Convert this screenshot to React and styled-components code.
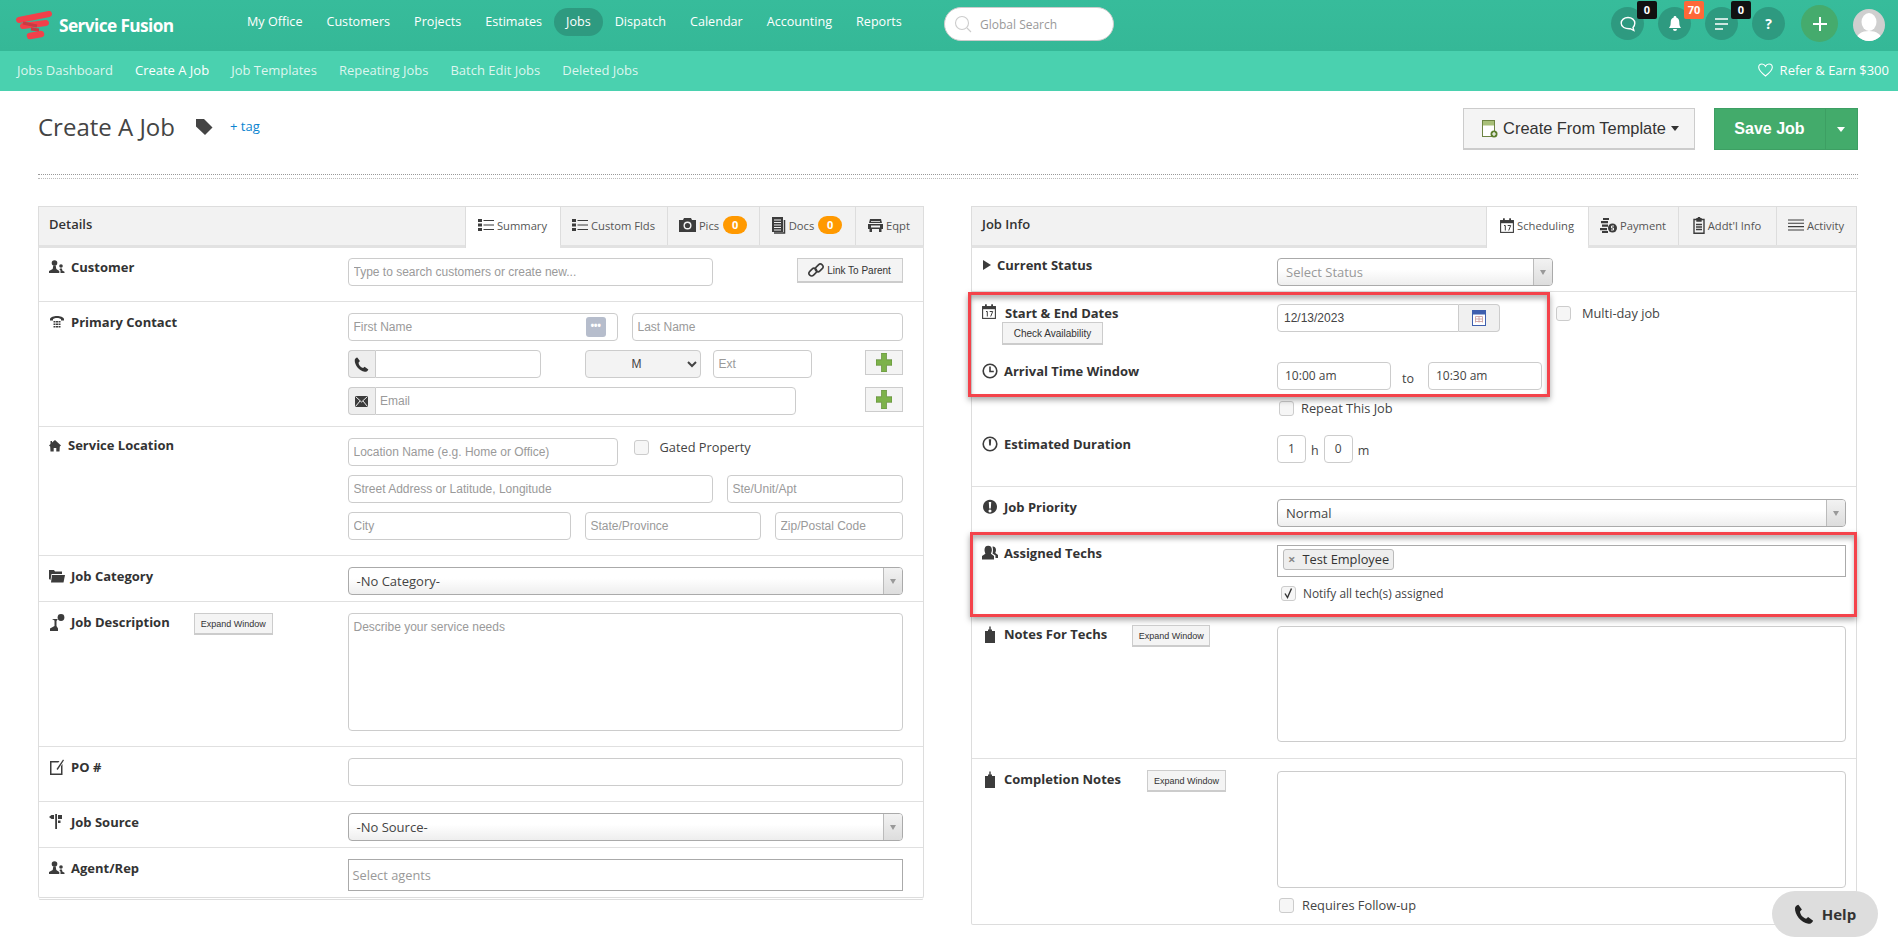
import React from "react";
import styled, { createGlobalStyle } from "styled-components";

const GlobalStyle = createGlobalStyle`
  html, body {
    margin: 0;
    padding: 0;
    background: #fff;
    font-family: "Open Sans", "Liberation Sans", sans-serif;
    color: #333;
  }
  * { box-sizing: border-box; }
  input::placeholder, textarea::placeholder { color: #9a9a9a; opacity: 1; }
`;

const TopBar = styled.div`
  position: relative;
  height: 51px;
  display: flex;
  align-items: flex-start;
  background: linear-gradient(#37bc9b, #35b897);
`;

const Brand = styled.div`
  width: 235px;
  height: 51px;
  display: flex;
  align-items: center;
  padding-left: 15px;
  flex-shrink: 0;
`;

const BrandName = styled.span`
  margin-left: 6px;
  color: #fff;
  font-size: 17.3px;
  font-weight: 700;
  letter-spacing: -0.6px;
  white-space: nowrap;
`;

const MainNav = styled.nav`
  display: flex;
  padding-top: 8px;
`;

const MainLink = styled.a`
  height: 28px;
  line-height: 28px;
  padding: 0 12px;
  border-radius: 14px;
  color: #fff;
  font-size: 12.6px;
  white-space: nowrap;
  background: ${(p) => (p.$active ? "#2e9a80" : "transparent")};
`;

const SearchBox = styled.div`
  position: absolute;
  left: 944px;
  top: 7px;
  width: 170px;
  height: 34px;
  display: flex;
  align-items: center;
  gap: 8px;
  padding-left: 9px;
  background: #fff;
  border: 1px solid #ccc;
  border-radius: 17px;
  font-size: 12px;
  color: #999;
`;

const Tools = styled.div`
  margin-left: auto;
  display: flex;
  align-items: flex-start;
  padding: 5px 13px 0 0;
`;

const ToolCircle = styled.div`
  position: relative;
  width: 33px;
  height: 33px;
  margin: 2px 14px 0 0;
  border-radius: 50%;
  background: #2e9a80;
  display: flex;
  align-items: center;
  justify-content: center;
  color: #fff;
  font-size: 14px;
  font-weight: 700;
`;

const Badge = styled.span`
  position: absolute;
  left: 26px;
  top: -6px;
  width: 20px;
  height: 18px;
  line-height: 18px;
  text-align: center;
  border-radius: 2px;
  font-size: 11px;
  font-weight: 700;
  color: #fff;
  background: ${(p) => p.$bg};
`;

const AddCircle = styled.div`
  width: 37px;
  height: 37px;
  margin: 0 15px 0 2px;
  border-radius: 50%;
  background: #45ab6d;
  display: flex;
  align-items: center;
  justify-content: center;
`;

const Avatar = styled.div`
  width: 32px;
  height: 32px;
  margin-top: 4px;
  border-radius: 50%;
  overflow: hidden;
  background: #cfcfcf;
`;

const SubBar = styled.div`
  height: 40px;
  display: flex;
  align-items: center;
  gap: 22px;
  padding: 0 9px 3px 17px;
  background: #4ad1af;
  font-size: 13px;
`;

const SubLink = styled.a`
  color: ${(p) => (p.$active ? "#fff" : "rgba(255,255,255,.82)")};
  white-space: nowrap;
`;

const Refer = styled.a`
  margin-left: auto;
  display: flex;
  align-items: center;
  gap: 7px;
  color: #fff;
`;

const Content = styled.main`
  padding: 17px 40.5px 0 38px;
`;

const TitleRow = styled.div`
  display: flex;
  align-items: flex-start;
  height: 42px;
`;

const Title = styled.h1`
  margin: 0;
  font-size: 24px;
  font-weight: 400;
  line-height: 37px;
  color: #444;
`;

const TagLink = styled.a`
  margin-left: 17px;
  line-height: 37px;
  font-size: 13px;
  color: #0a84d0;
`;

const TagIcon = styled.svg`
  margin: 11px 0 0 21px;
`;

const TemplateButton = styled.button`
  margin-left: auto;
  width: 232px;
  height: 42px;
  display: flex;
  align-items: center;
  justify-content: center;
  gap: 5px;
  background: #f4f4f4;
  border: 1px solid #ccc;
  border-bottom-width: 2px;
  font: 16.4px "Liberation Sans", Arial, sans-serif;
  color: #333;
  padding: 0 0 0 4px;
`;

const SaveGroup = styled.div`
  margin-left: 19px;
  height: 42px;
  display: flex;
  background: #43ab6b;
  border: 1px solid #3d9f63;
`;

const SaveButton = styled.div`
  width: 110px;
  text-align: center;
  color: #fff;
  font: bold 16px/40px "Liberation Sans", Arial, sans-serif;
`;

const SaveCaret = styled.div`
  width: 32px;
  border-left: 1px solid #3d9f63;
  display: flex;
  align-items: center;
  justify-content: center;
`;

const Caret = styled.span`
  display: inline-block;
  border-left: 4px solid transparent;
  border-right: 4px solid transparent;
  border-top: 5px solid ${(p) => p.$color};
`;

const DottedRule = styled.div`
  height: 5px;
  margin: 24px 0 27px;
  border-top: 1px dotted #999;
  border-bottom: 1px dotted #bbb;
`;

const Columns = styled.div`
  display: grid;
  grid-template-columns: 885.5px 885.5px;
  column-gap: 47.5px;
  align-items: start;
`;

const Panel = styled.section`
  border: 1px solid #ddd;
  border-top-width: 0;
  border-radius: 2px;
  box-shadow: 0 2px 0 -1px #fff, 0 3px 0 -1px #ddd, 0 4px 0 -3px #fff, 0 5px 0 -3px #e4e4e4;
`;

const PanelHead = styled.header`
  height: 42px;
  display: flex;
  background: #f2f2f2;
  border-top: 1px solid #ddd;
  border-bottom: 3px solid #e2e2e2;
  margin: 0 -1px;
  border-left: 1px solid #ddd;
  border-right: 1px solid #ddd;
`;

const PanelTitle = styled.div`
  flex: 1;
  padding-left: 10px;
  font-size: 13px;
  font-weight: 600;
  line-height: 35px;
  color: #333;
`;

const Tab = styled.div`
  width: ${(p) => p.$w}px;
  display: flex;
  align-items: center;
  justify-content: center;
  gap: 3px;
  border-left: 1px solid #ddd;
  font-size: 11.2px;
  color: #555;
  height: ${(p) => (p.$active ? "41px" : "38px")};
  padding-bottom: ${(p) => (p.$active ? "5px" : "2px")};
  background: ${(p) => (p.$active ? "#fff" : "transparent")};
  white-space: nowrap;
`;

const Count = styled.span`
  margin-left: 1px;
  width: 24px;
  height: 18px;
  line-height: 18px;
  border-radius: 9px;
  text-align: center;
  background: #f90;
  color: #fff;
  font-size: 11px;
  font-weight: 700;
`;

const Row = styled.div`
  position: relative;
  display: grid;
  grid-template-columns: ${(p) => p.$col}px 1fr;
  grid-template-rows: ${(p) => p.$rows || "auto"};
  padding: ${(p) => p.$pt ?? 12}px ${(p) => p.$pr ?? 20}px ${(p) => p.$pb ?? 14}px 10px;
  border-bottom: ${(p) => (p.$last ? "none" : "1px solid #e0e0e0")};
`;

const Label = styled.div`
  display: flex;
  align-items: flex-start;
  gap: ${(p) => p.$gap ?? 6}px;
  margin-top: ${(p) => p.$mt ?? 0}px;
  font-size: 13px;
  font-weight: 700;
  line-height: 19px;
  color: #333;
  white-space: nowrap;
`;

const LabelIcon = styled.svg`
  flex-shrink: 0;
  margin-top: 1px;
  fill: #3c3c3c;
`;

const LabelStack = styled.div`
  display: flex;
  flex-direction: column;
  align-items: flex-start;
`;

const SmallButton = styled.div`
  width: ${(p) => p.$w}px;
  height: ${(p) => p.$h || 22}px;
  margin-left: ${(p) => p.$ml || 0}px;
  margin-top: ${(p) => p.$mt || 0}px;
  display: flex;
  align-items: center;
  justify-content: center;
  gap: 3px;
  flex-shrink: 0;
  background: #f4f4f4;
  border: 1px solid #ccc;
  border-bottom-width: 2px;
  font: 400 ${(p) => p.$size || 10}px "Liberation Sans", Arial, sans-serif;
  color: #333;
`;

const Fields = styled.div`
  display: flex;
  flex-direction: column;
  gap: 9px;
`;

const Line = styled.div`
  display: flex;
  align-items: ${(p) => p.$align || "flex-start"};
  gap: ${(p) => p.$gap ?? 0}px;
  position: relative;
`;

const Input = styled.input`
  width: ${(p) => (p.$w ? `${p.$w}px` : "100%")};
  height: 28px;
  margin-left: ${(p) => p.$ml || 0}px;
  padding: 0 5px;
  flex-shrink: 0;
  background: #fff;
  border: 1px solid #ccc;
  border-radius: 4px;
  font: 12px "Liberation Sans", Arial, sans-serif;
  color: #444;
  outline: none;
`;

const SansInput = styled(Input)`
  font-family: "Open Sans", sans-serif;
  text-align: ${(p) => (p.$center ? "center" : "left")};
  padding: 0 ${(p) => (p.$center ? 2 : 7)}px 2px;
`;

const DateInput = styled(Input)`
  border-radius: 4px 0 0 4px;
  padding-left: 6px;
`;

const Area = styled.textarea`
  display: block;
  width: 100%;
  height: ${(p) => p.$h}px;
  padding: 6px 5px;
  resize: none;
  border: 1px solid #ccc;
  border-radius: 4px;
  font: 12px "Liberation Sans", Arial, sans-serif;
`;

const Square = styled.div`
  width: 100%;
  height: 32px;
  display: flex;
  align-items: center;
  padding: 0 0 1px 4px;
  border: 1px solid #aaa;
  font-size: 12.8px;
  color: #999;
`;

const SelectBox = styled.div`
  display: flex;
  width: ${(p) => (p.$w ? `${p.$w}px` : "100%")};
  height: 28px;
  border: 1px solid #aaa;
  border-radius: 4px;
  overflow: hidden;
  background: linear-gradient(#fff 40%, #eee);
`;

const SelectText = styled.div`
  flex: 1;
  padding-left: 8px;
  line-height: 26px;
  font-size: 13px;
  color: ${(p) => (p.$muted ? "#999" : "#444")};
`;

const SelectArrow = styled.div`
  width: 19px;
  display: flex;
  align-items: center;
  justify-content: center;
  border-left: 1px solid #bbb;
  background: linear-gradient(#f2f2f2, #ddd);
`;

const SmallCaret = styled.span`
  display: inline-block;
  border-left: 3px solid transparent;
  border-right: 3px solid transparent;
  border-top: 5px solid #999;
`;

const Addon = styled.div`
  width: 27.5px;
  height: 28px;
  flex-shrink: 0;
  display: flex;
  align-items: center;
  justify-content: center;
  background: #eee;
  border: 1px solid #ccc;
  border-right: none;
  border-radius: 4px 0 0 4px;
`;

const GroupInput = styled(Input)`
  border-radius: 0 4px 4px 0;
  padding-left: 4px;
`;

const ContactPicker = styled.div`
  position: absolute;
  left: 238px;
  top: 4px;
  width: 20px;
  height: 20px;
  border-radius: 3px;
  background: #b6bdcc;
  color: #fff;
  font-size: 10px;
  font-weight: 700;
  line-height: 17px;
  text-align: center;
  letter-spacing: -0.5px;
`;

const GenderSelect = styled.select`
  width: 116px;
  height: 28px;
  margin-left: 44px;
  padding-left: 42px;
  background: #f3f3f3;
  border: 1px solid #ccc;
  border-radius: 4px;
  font: 12px "Liberation Sans", Arial, sans-serif;
  color: #444;
`;

const PlusButton = styled.div`
  width: 37.5px;
  height: 25px;
  margin-left: auto;
  display: flex;
  align-items: center;
  justify-content: center;
  background: #f4f4f4;
  border: 1px solid #ccc;
`;

const Box = styled.span`
  width: 15px;
  height: 15px;
  flex-shrink: 0;
  display: inline-flex;
  align-items: center;
  justify-content: center;
  background: #f6f6f6;
  border: 1px solid #ccc;
  border-radius: 3px;
`;

const CheckLabel = styled.label`
  display: flex;
  align-items: center;
  align-self: flex-start;
  gap: ${(p) => p.$gap ?? 7}px;
  margin: ${(p) => p.$margin || 0};
  font-size: ${(p) => p.$size || 12.8}px;
  color: #444;
  white-space: nowrap;
`;

const Unit = styled.span`
  font-size: 12.5px;
  color: #444;
  margin: ${(p) => p.$margin};
`;

const DateAddon = styled.div`
  width: 41px;
  height: 28px;
  display: flex;
  align-items: center;
  justify-content: center;
  background: #f0f0f0;
  border: 1px solid #ccc;
  border-left: none;
  border-radius: 0 4px 4px 0;
`;

const TagField = styled.div`
  width: 100%;
  height: 32px;
  display: flex;
  align-items: flex-start;
  padding: 3px 0 0 5px;
  border: 1px solid #aaa;
`;

const Chip = styled.span`
  height: 21px;
  width: 111px;
  display: flex;
  align-items: center;
  gap: 7px;
  padding: 0 0 2px 4px;
  background: #eee;
  border: 1px solid #bbb;
  border-radius: 3px;
  font-size: 12.8px;
  white-space: nowrap;
  color: #333;
`;

const ChipX = styled.span`
  color: #888;
  font-size: 13px;
  font-weight: 700;
`;

const Highlight = styled.div`
  position: absolute;
  left: ${(p) => p.$left}px;
  top: ${(p) => p.$top}px;
  width: ${(p) => p.$w}px;
  height: ${(p) => p.$h}px;
  border: 3px solid #f4434b;
  box-shadow: 0 3px 6px rgba(0, 0, 0, 0.35), inset 0 4px 5px rgba(0, 0, 0, 0.28);
  pointer-events: none;
`;

const HelpButton = styled.div`
  position: fixed;
  left: 1772px;
  top: 891px;
  width: 106px;
  height: 46px;
  display: flex;
  align-items: center;
  justify-content: center;
  gap: 8px;
  background: #ddd;
  border-radius: 23px;
  font-size: 15px;
  font-weight: 700;
  color: #333;
`;

/* drawings */
const Logo = () => (
  <svg width="38" height="30" viewBox="0 0 38 30">
    <path d="M4 9 L34 3 M8 15 L31 12" stroke="#f2404a" strokeWidth="6" strokeLinecap="round" fill="none" />
    <path d="M15 25 L26 23" stroke="#f2404a" strokeWidth="6.5" strokeLinecap="round" fill="none" />
    <path d="M8 12 L22 15 M16 18 L24 19" stroke="#c93a42" strokeWidth="3" fill="none" />
  </svg>
);

const Users = ({ w = 16 }) => (
  <LabelIcon width={w} height="16" viewBox="0 0 16 16">
    <circle cx="5.5" cy="4" r="2.8" />
    <path d="M4.3 6.5h2.4l.6 3.5 3 2V14H0v-2l3.7-2z" />
    <circle cx="12" cy="7" r="1.8" />
    <path d="M11 9.5h2l.3 2 2.2 1.2V14h-4v-2.6l-1-1z" />
  </LabelIcon>
);

const PhoneDesk = () => (
  <LabelIcon width="16" height="16" viewBox="0 0 16 16">
    <path d="M1 5c1-4 13-4 14 0v1.5h-3V5C10 3.5 6 3.5 4 5v1.5H1z" />
    <path d="M4.5 7h2v1.5h-2zM7 7h2v1.5H7zM9.5 7h2v1.5h-2zM4.5 9.5h2V11h-2zM7 9.5h2V11H7zM9.5 9.5h2V11h-2zM4.5 12h2v1.5h-2zM7 12h2v1.5H7zM9.5 12h2v1.5h-2z" />
  </LabelIcon>
);

const Home = () => (
  <LabelIcon width="12" height="16" viewBox="0 0 12 16">
    <path d="M6 3 L12 8.5 L10.8 9.5 L10.5 14.5 H7.3 V11 H4.7 V14.5 H1.5 L1.2 9.5 L0 8.5 L1.5 7 V4 H3 V5.6z" />
  </LabelIcon>
);

const Folder = () => (
  <LabelIcon width="16" height="16" viewBox="0 0 16 16">
    <path d="M0 2h5l1 1.5h7V6H2.5L1.5 12 0 11z" />
    <path d="M3 7h13l-1.5 7.5H2z" />
  </LabelIcon>
);

const Speaker = () => (
  <LabelIcon width="16" height="17" viewBox="0 0 16 17">
    <circle cx="12" cy="3.5" r="3.4" />
    <path d="M8.8 5 H3 l2.5 1.5 V12 L1 14.5 V17 h8 v-2.5 L7.5 12 V7z" />
  </LabelIcon>
);

const EditBox = () => (
  <LabelIcon width="16" height="17" viewBox="0 0 16 17">
    <path d="M1 2h9.5L9.3 3.5H2.5V14.5H12V7l1.5-2V16H1z" />
    <path d="M7.5 10 L14 0.5 l1 .8 L8.7 11z" />
  </LabelIcon>
);

const SignPost = () => (
  <LabelIcon width="16" height="17" viewBox="0 0 16 17">
    <rect x="6.2" y="0" width="1.8" height="15" />
    <path d="M0 3l2.5-2H5v4H2.5zM9 1h4v4H9zM9 6.5h2.5v2.5H9z" />
  </LabelIcon>
);

const Triangle = () => (
  <LabelIcon width="10" height="16" viewBox="0 0 10 16">
    <path d="M1 3 L9 8 L1 13z" />
  </LabelIcon>
);

const CalendarDay = ({ size = 16, fill = "#3c3c3c" }) => (
  <svg width={size} height={size + 1} viewBox="0 0 14 15" style={{ flexShrink: 0 }}>
    <rect x="0.6" y="2.6" width="12.8" height="11.8" fill="#fff" stroke={fill} strokeWidth="1.1" />
    <rect x="0.6" y="2.6" width="12.8" height="2.6" fill={fill} />
    <rect x="3" y="0.3" width="1.8" height="3.4" fill={fill} />
    <rect x="9.2" y="0.3" width="1.8" height="3.4" fill={fill} />
    <path d="M4 7.5h1.3v5M7.7 7.5h3l-2 5" fill="none" stroke={fill} strokeWidth="1" />
  </svg>
);

const Clock = () => (
  <LabelIcon width="16" height="16" viewBox="0 0 16 16" style={{ fill: "none" }}>
    <circle cx="8" cy="8" r="6.8" stroke="#3c3c3c" strokeWidth="1.6" />
    <path d="M8 3.5V8.5H11.8" stroke="#3c3c3c" strokeWidth="1.6" />
  </LabelIcon>
);

const Timer = () => (
  <LabelIcon width="16" height="16" viewBox="0 0 16 16" style={{ fill: "none" }}>
    <circle cx="8" cy="8" r="6.8" stroke="#3c3c3c" strokeWidth="1.6" />
    <path d="M6.8 3.2h2.4L8.8 9.5H7.2z" fill="#3c3c3c" />
  </LabelIcon>
);

const Alert = () => (
  <LabelIcon width="16" height="16" viewBox="0 0 16 16">
    <path d="M8 .8a7 7 0 1 0 .01 0zM6.8 3h2.4l-.4 6.5H7.2zM8 10.5a1.5 1.5 0 1 1-.01 0z" fillRule="evenodd" />
  </LabelIcon>
);

const Techs = () => (
  <LabelIcon width="16" height="16" viewBox="0 0 16 16">
    <path d="M2.5 5a3.7 4.3 0 0 1 7.4 0 c0 2-1 3-1 3.8L12 11v3.5H0V11l3.4-2.2C3.4 8 2.5 7 2.5 5z" />
    <path d="M10.5 1.5a3 3.5 0 0 1 3.5 3.5c0 1.5-.7 2.5-.7 3l2.7 2V13h-2.5v-2.5L10.5 8.5c.5-1.5.8-4 0-7z" />
  </LabelIcon>
);

const Clipboard = () => (
  <LabelIcon width="16" height="17" viewBox="0 0 16 17">
    <path d="M3 5h3V3.500h1.300V.5h1.400v3H10V5h3v12H3z" />
  </LabelIcon>
);

const ListIcon = () => (
  <svg width="16" height="12" viewBox="0 0 16 12" fill="#3c3c3c">
    <path d="M0 0h4v3H0zM0 4.500h4v3H0zM0 9h4v3H0zM5.500 1h10.500v1.100H5.500zM5.500 5.500h10.500v1.100H5.500zM5.500 10h10.500v1.100H5.500z" />
  </svg>
);

const Camera = () => (
  <svg width="17" height="14" viewBox="0 0 17 14">
    <path d="M0 2h4l1-2h7l1 2h4v12H0z" fill="#3c3c3c" />
    <circle cx="8.500" cy="7.500" r="4" fill="#f2f2f2" />
    <circle cx="8.500" cy="7.500" r="2.600" fill="#3c3c3c" />
  </svg>
);

const DocsIcon = () => (
  <svg width="14" height="17" viewBox="0 0 14 17">
    <rect x="0" y="0" width="11" height="15" fill="#3c3c3c" />
    <path d="M2 3h7M2 5.500h7M2 8h7M2 10.500h7M2 13h7" stroke="#f2f2f2" strokeWidth="1" />
    <path d="M12.500 3v13H2" stroke="#3c3c3c" strokeWidth="1.500" fill="none" />
  </svg>
);

const Seat = () => (
  <svg width="15" height="13" viewBox="0 0 15 13" fill="#3c3c3c">
    <path d="M2 0h11l1 4H1zM0 5h15v5h-1.500v3H11v-3H4v3H1.500v-3H0z" />
    <path d="M3 6.500h9v2H3z" fill="#f2f2f2" />
    <path d="M3 2h9v.8H3z" fill="#f2f2f2" />
  </svg>
);

const Coins = () => (
  <svg width="17" height="15" viewBox="0 0 17 15" fill="#3c3c3c">
    <path d="M3 0h6v2H3zM1 3h7v2.200H1zM2 6.500h6v2.200H2zM0 10h7v2.200H0zM2 13h6v2H2z" />
    <circle cx="12.500" cy="10" r="4.500" />
    <path d="M14 8h-2.500v2h2v2H11" stroke="#fff" strokeWidth="0.900" fill="none" />
  </svg>
);

const ClipOutline = () => (
  <svg width="12" height="17" viewBox="0 0 12 17" fill="none" stroke="#3c3c3c" strokeWidth="1.400">
    <path d="M4 2.500H1v13.800h10V2.500H8" />
    <path d="M4 4V1.800h1.500V.7h1v1.100H8V4z" fill="#3c3c3c" />
    <path d="M3 7.500h6M3 10h6M3 12.500h6" />
  </svg>
);

const Lines = () => (
  <svg width="16" height="12" viewBox="0 0 16 12" stroke="#3c3c3c" strokeWidth="1.100">
    <path d="M0 1h16M0 4.300h16M0 7.600h16M0 11h16" />
  </svg>
);

const Handset = ({ size = 16, fill = "#333" }) => (
  <svg width={size} height={size} viewBox="0 0 16 16" fill={fill}>
    <path d="M3.500 0.500 L6.300 4.300 L4.800 6 C5 8.500 7 11 9.700 11.700 L11.300 10.400 L15.300 13.300 C14.700 15 13 16 11.500 15.800 C5.500 14.800 0.500 8.500 0.800 3.200 C1 1.800 2 0.800 3.500 0.500z" />
  </svg>
);

const Envelope = () => (
  <svg width="13" height="11" viewBox="0 0 13 11">
    <rect width="13" height="11" fill="#3c3c3c" />
    <path d="M0.500 0.500 L6.500 6 L12.500 0.500 M0.500 10.500 L5 5 M12.500 10.500 L8 5" stroke="#eee" strokeWidth="1" fill="none" />
  </svg>
);

const GreenPlus = () => (
  <svg width="16" height="19" viewBox="0 0 16 19">
    <path d="M5.500 0h5v6.700H16v5.600h-5.500V19h-5v-6.700H0V6.700h5.500z" fill="#7db24a" stroke="#557f2c" strokeWidth="0.600" />
  </svg>
);

const ChainLink = () => (
  <svg width="16" height="16" viewBox="0 0 15 15" fill="none" stroke="#3c3c3c" strokeWidth="1.500">
    <rect x="0.500" y="7" width="8" height="5" rx="2.500" transform="rotate(-45 4.500 9.500)" />
    <rect x="6.500" y="3" width="8" height="5" rx="2.500" transform="rotate(-45 10.500 5.500)" />
  </svg>
);

const DateIcon = () => (
  <svg width="14" height="16" viewBox="0 0 14 16">
    <rect x="0.500" y="0.500" width="13" height="15" fill="#fff" stroke="#3f5fae" />
    <rect x="1" y="1" width="12" height="3.500" fill="#3f5fae" />
    <path d="M3.500 6.500h7M3.500 9h7M3.500 11.500h7M3.500 6.500v6M7 6.500v6M10.500 6.500v6" stroke="#c99" strokeWidth="0.800" />
  </svg>
);

const TemplateIcon = () => (
  <svg width="16" height="18" viewBox="0 0 16 18">
    <rect x="0.500" y="0.500" width="12" height="16" fill="#fff" stroke="#6d8442" />
    <rect x="1" y="1" width="11" height="4.500" fill="#a8bf78" />
    <circle cx="12" cy="14" r="3.500" fill="#5b7e2c" />
    <path d="M12 12v4M10 14h4" stroke="#fff" strokeWidth="1.200" />
  </svg>
);

const Select = ({ text, muted, w }) => (
  <SelectBox $w={w}>
    <SelectText $muted={muted}>{text}</SelectText>
    <SelectArrow><SmallCaret /></SelectArrow>
  </SelectBox>
);

const CheckBox = ({ checked }) => (
  <Box>
    {checked && (
      <svg width="11" height="12" viewBox="0 0 11 12">
        <path d="M2 6.500 L4.500 10.500 L8.500 1.500" stroke="#333" strokeWidth="1.400" fill="none" />
      </svg>
    )}
  </Box>
);

const navItems = ["My Office", "Customers", "Projects", "Estimates", "Jobs", "Dispatch", "Calendar", "Accounting", "Reports"];
const subItems = ["Jobs Dashboard", "Create A Job", "Job Templates", "Repeating Jobs", "Batch Edit Jobs", "Deleted Jobs"];

export default function App() {
  return (
    <>
      <GlobalStyle />
      <TopBar>
        <Brand>
          <Logo />
          <BrandName>Service Fusion</BrandName>
        </Brand>
        <MainNav>
          {navItems.map((item) => (
            <MainLink key={item} $active={item === "Jobs"}>{item}</MainLink>
          ))}
        </MainNav>
        <SearchBox>
          <svg width="18" height="18" viewBox="0 0 18 18" fill="none" stroke="#ccc" strokeWidth="1.100">
            <circle cx="8" cy="8" r="6.500" />
            <path d="M13 13l4 4" />
          </svg>
          Global Search
        </SearchBox>
        <Tools>
          <ToolCircle>
            <svg width="16" height="16" viewBox="0 0 16 16" fill="none" stroke="#fff" strokeWidth="1.400">
              <path d="M8 1.500c3.800 0 6.800 2.400 6.800 5.700 0 2-1 3.500-1.800 4.300l.8 3-3.500-1.800C5 13 1.200 11 1.200 7.200 1.200 3.900 4.200 1.500 8 1.500z" />
            </svg>
            <Badge $bg="#111">0</Badge>
          </ToolCircle>
          <ToolCircle>
            <svg width="14" height="16" viewBox="0 0 14 16" fill="#fff">
              <path d="M7 0a1.300 1.300 0 0 1 1.300 1.500C10.500 2.200 11.300 4 11.300 6.500c0 2.500.5 4 1.700 5.500H1c1.200-1.500 1.700-3 1.700-5.500 0-2.500.8-4.300 3-5A1.300 1.300 0 0 1 7 0zM5 13h4a2 2 0 0 1-4 0z" />
            </svg>
            <Badge $bg="#ff6838">70</Badge>
          </ToolCircle>
          <ToolCircle>
            <svg width="14" height="12" viewBox="0 0 14 12" stroke="#fff" strokeWidth="1.400">
              <path d="M0 1h13M0 6h13M0 11h8" />
            </svg>
            <Badge $bg="#111">0</Badge>
          </ToolCircle>
          <ToolCircle>?</ToolCircle>
          <AddCircle>
            <svg width="14" height="14" viewBox="0 0 14 14" stroke="#fff" strokeWidth="2">
              <path d="M7 0v14M0 7h14" />
            </svg>
          </AddCircle>
          <Avatar>
            <svg width="32" height="32" viewBox="0 0 32 32" fill="#fff">
              <ellipse cx="16" cy="13" rx="7.500" ry="9" />
              <path d="M3 32c0-7 6-10 13-10s13 3 13 10z" />
            </svg>
          </Avatar>
        </Tools>
      </TopBar>
      <SubBar>
        {subItems.map((item) => (
          <SubLink key={item} $active={item === "Create A Job"}>{item}</SubLink>
        ))}
        <Refer>
          <svg width="15" height="14" viewBox="0 0 15 14" fill="none" stroke="#fff" strokeWidth="1.100">
            <path d="M7.500 13C3 9.500.7 7.300.7 4.300.7 2.300 2.200 1 4 1c1.500 0 2.800.9 3.500 2.300C8.200 1.900 9.500 1 11 1c1.800 0 3.300 1.300 3.300 3.300C14.300 7.300 12 9.500 7.500 13z" />
          </svg>
          Refer &amp; Earn $300
        </Refer>
      </SubBar>

      <Content>
        <TitleRow>
          <Title>Create A Job</Title>
          <TagIcon width="17" height="16" viewBox="0 0 17 16" fill="#444">
            <path d="M0 0h8l8.500 8.500L9 16 0 7.500z" />
          </TagIcon>
          <TagLink>+ tag</TagLink>
          <TemplateButton>
            <TemplateIcon />
            Create From Template
            <Caret $color="#333" />
          </TemplateButton>
          <SaveGroup>
            <SaveButton>Save Job</SaveButton>
            <SaveCaret><Caret $color="#fff" /></SaveCaret>
          </SaveGroup>
        </TitleRow>
        <DottedRule />

        <Columns>
          <Panel>
            <PanelHead>
              <PanelTitle>Details</PanelTitle>
              <Tab $w={95} $active><ListIcon />Summary</Tab>
              <Tab $w={107}><ListIcon />Custom Flds</Tab>
              <Tab $w={92}><Camera />Pics<Count>0</Count></Tab>
              <Tab $w={96}><DocsIcon />Docs<Count>0</Count></Tab>
              <Tab $w={68}><Seat />Eqpt</Tab>
            </PanelHead>

            <Row $col={298.5} $pt={10} $pb={15}>
              <Label><Users />Customer</Label>
              <Line>
                <Input $w={365} placeholder="Type to search customers or create new..." />
                <SmallButton $w={106} $h={25} $ml={84}>
                  <ChainLink />Link To Parent
                </SmallButton>
              </Line>
            </Row>

            <Row $col={298.5} $pt={11} $pb={11}>
              <Label><PhoneDesk />Primary Contact</Label>
              <Fields>
                <Line $gap={14}>
                  <Input $w={270} placeholder="First Name" />
                  <ContactPicker>•••</ContactPicker>
                  <Input $w={271} placeholder="Last Name" />
                </Line>
                <Line>
                  <Addon><Handset size={15} /></Addon>
                  <GroupInput $w={165.5} />
                  <GenderSelect defaultValue="M"><option>M</option></GenderSelect>
                  <Input $w={99} $ml={12} placeholder="Ext" />
                  <PlusButton><GreenPlus /></PlusButton>
                </Line>
                <Line>
                  <Addon><Envelope /></Addon>
                  <GroupInput $w={420.5} placeholder="Email" />
                  <PlusButton><GreenPlus /></PlusButton>
                </Line>
              </Fields>
            </Row>

            <Row $col={298.5} $pt={11} $pb={15}>
              <Label $gap={7} $mt={-2}><Home />Service Location</Label>
              <Fields>
                <Line>
                  <Input $w={270} placeholder="Location Name (e.g. Home or Office)" />
                  <CheckLabel $margin="0 0 0 16px" $gap={11}><CheckBox />Gated Property</CheckLabel>
                </Line>
                <Line $gap={14}>
                  <Input $w={365} placeholder="Street Address or Latitude, Longitude" />
                  <Input $w={176} placeholder="Ste/Unit/Apt" />
                </Line>
                <Line $gap={14}>
                  <Input $w={223} placeholder="City" />
                  <Input $w={176} placeholder="State/Province" />
                  <Input $w={128} placeholder="Zip/Postal Code" />
                </Line>
              </Fields>
            </Row>

            <Row $col={298.5} $pt={11} $pb={6}>
              <Label><Folder />Job Category</Label>
              <Select text="-No Category-" />
            </Row>

            <Row $col={298.5} $pt={11} $pb={15}>
              <Label>
                <Speaker />Job Description
                <SmallButton $w={79} $ml={18} $size={9}>Expand Window</SmallButton>
              </Label>
              <Area $h={118} placeholder="Describe your service needs" />
            </Row>

            <Row $col={298.5} $pt={11} $pb={15}>
              <Label><EditBox />PO #</Label>
              <Input />
            </Row>

            <Row $col={298.5} $pt={11} $pb={6}>
              <Label><SignPost />Job Source</Label>
              <Select text="-No Source-" />
            </Row>

            <Row $col={298.5} $pt={11} $pb={6} $last>
              <Label><Users />Agent/Rep</Label>
              <Square>Select agents</Square>
            </Row>
          </Panel>

          <Panel>
            <PanelHead>
              <PanelTitle>Job Info</PanelTitle>
              <Tab $w={102} $active><CalendarDay size={14} />Scheduling</Tab>
              <Tab $w={90}><Coins />Payment</Tab>
              <Tab $w={98}><ClipOutline />Addt'l Info</Tab>
              <Tab $w={80}><Lines />Activity</Tab>
            </PanelHead>

            <Row $col={295} $pt={10} $pb={5} $pr={10}>
              <Label $gap={5} $mt={-2}><Triangle />Current Status</Label>
              <Select text="Select Status" muted w={276} />
            </Row>

            <Row $col={295} $pb={23} $pr={10} $rows="58px 40px 33px auto">
              <LabelStack>
                <Label $gap={9}><CalendarDay size={14} />Start &amp; End Dates</Label>
                <SmallButton $w={101} $h={23} $ml={20} $mt={-1}>Check Availability</SmallButton>
              </LabelStack>
              <Line>
                <DateInput $w={182} defaultValue="12/13/2023" />
                <DateAddon><DateIcon /></DateAddon>
                <CheckLabel $margin="0 0 0 56px" $gap={11}><CheckBox />Multi-day job</CheckLabel>
              </Line>
              <Label><Clock />Arrival Time Window</Label>
              <Line>
                <SansInput $w={114} defaultValue="10:00 am" />
                <Unit $margin="8px 14px 0 11px">to</Unit>
                <SansInput $w={114} defaultValue="10:30 am" />
              </Line>
              <span />
              <CheckLabel $margin="-3px 0 0 2px" $gap={7}><CheckBox />Repeat This Job</CheckLabel>
              <Label><Timer />Estimated Duration</Label>
              <Line $align="center">
                <SansInput $w={29} $center defaultValue="1" />
                <Unit $margin="2px 5px 0 5px">h</Unit>
                <SansInput $w={29} $center defaultValue="0" />
                <Unit $margin="2px 0 0 5px">m</Unit>
              </Line>
              <Highlight $left={-4} $top={0} $w={582} $h={105} />
            </Row>

            <Row $col={295} $pb={5} $pr={10}>
              <Label $mt={-1}><Alert />Job Priority</Label>
              <Select text="Normal" />
            </Row>

            <Row $col={295} $pb={13} $pr={10}>
              <Label $mt={-1}><Techs />Assigned Techs</Label>
              <Fields>
                <TagField><Chip><ChipX>×</ChipX>Test Employee</Chip></TagField>
                <CheckLabel $margin="-1px 0 0 4px" $size={11.9} $gap={7}><CheckBox checked />Notify all tech(s) assigned</CheckLabel>
              </Fields>
              <Highlight $left={-2} $top={-1} $w={887} $h={85} />
            </Row>

            <Row $col={295} $pt={11} $pb={16} $pr={10}>
              <Label $mt={-1}>
                <Clipboard />Notes For Techs
                <SmallButton $w={78} $ml={19} $size={9}>Expand Window</SmallButton>
              </Label>
              <Area $h={116} />
            </Row>

            <Row $col={295} $pb={10} $pr={10} $last>
              <Label $mt={-1}>
                <Clipboard />Completion Notes
                <SmallButton $w={79} $ml={20} $size={9}>Expand Window</SmallButton>
              </Label>
              <Fields>
                <Area $h={117} />
                <CheckLabel $margin="-1px 0 0 2px" $gap={8}><CheckBox />Requires Follow-up</CheckLabel>
              </Fields>
            </Row>
          </Panel>
        </Columns>
      </Content>

      <HelpButton><Handset size={20} fill="#222" />Help</HelpButton>
    </>
  );
}
